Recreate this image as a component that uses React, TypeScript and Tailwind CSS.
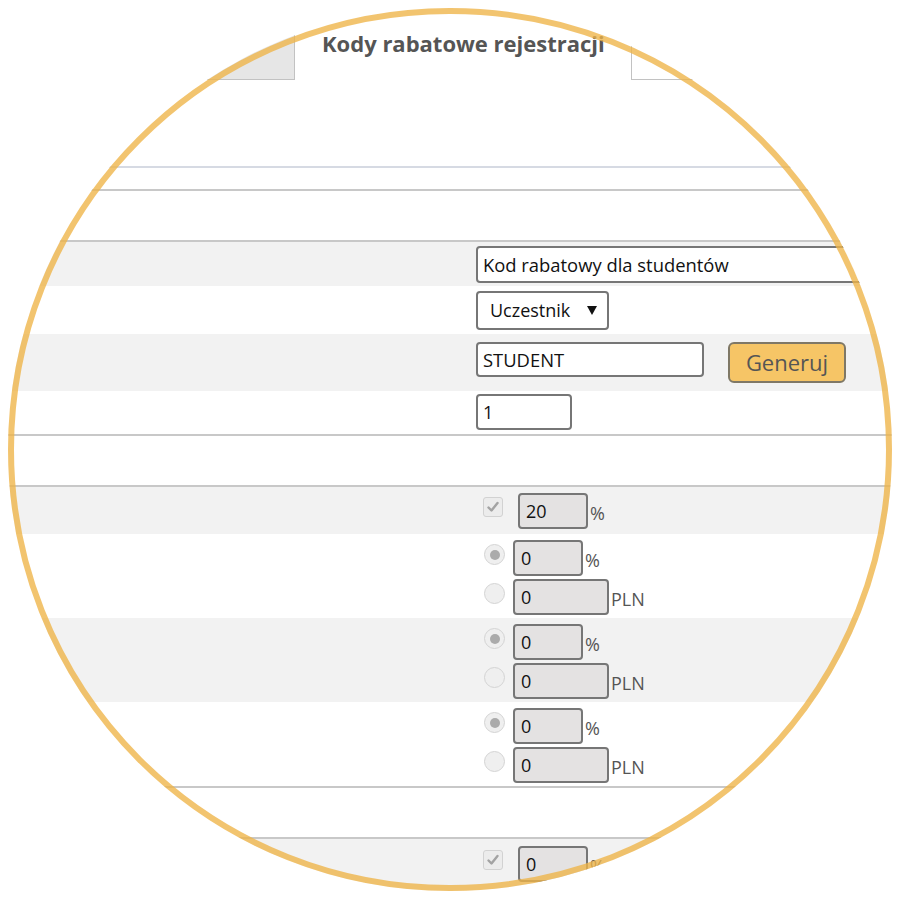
import React from "react";

function Line({ color = "bg-[#c8c8c8]" }: { color?: string }) {
  return <div className={`h-[2px] w-full ${color}`} />;
}

function Check() {
  return (
    <div className="mt-[4px] ml-[7px] flex h-[20px] w-[20px] items-center justify-center rounded-[3px] border border-[#d2d2d2] bg-[#ececec]">
      <svg width="14" height="14" viewBox="0 0 14 14">
        <path d="M2.5 7.5 L5.5 10.5 L11.5 3" fill="none" stroke="#a3a3a3" strokeWidth="2.4" strokeLinecap="round" strokeLinejoin="round" />
      </svg>
    </div>
  );
}

function Radio({ on }: { on?: boolean }) {
  return (
    <div className="mt-[4px] ml-[8px] flex h-[21px] w-[21px] items-center justify-center rounded-full border border-[#d4d4d4] bg-[#efefef]">
      {on ? <div className="h-[10px] w-[10px] rounded-full bg-[#ababab]" /> : null}
    </div>
  );
}

function DisInput({ value, w, ml }: { value: string; w: string; ml: string }) {
  return (
    <div className={`${w} ${ml} flex h-[36px] items-center rounded-[4px] border-2 border-[#767676] bg-[#e4e2e2] pl-[6px] text-[18px] text-[#111]`}>
      {value}
    </div>
  );
}

function Unit({ children }: { children: React.ReactNode }) {
  return <span className="mt-[8px] ml-[2px] text-[18px] leading-[24px] text-[#555]">{children}</span>;
}

function RadioPair({ pt = "pt-[6px]" }: { pt?: string }) {
  return (
    <div className={`flex flex-col gap-[3px] ${pt}`}>
      <div className="flex items-start">
        <Radio on />
        <DisInput value="0" w="w-[70px]" ml="ml-[8px]" />
        <Unit>%</Unit>
      </div>
      <div className="flex items-start">
        <Radio />
        <DisInput value="0" w="w-[96px]" ml="ml-[8px]" />
        <Unit>PLN</Unit>
      </div>
    </div>
  );
}

function Row({ bg, h, children }: { bg: string; h: string; children: React.ReactNode }) {
  return (
    <div className={`flex w-full ${bg} ${h}`}>
      <div className="w-[476px] shrink-0" />
      <div className="flex-1">{children}</div>
    </div>
  );
}

export default function App() {
  return (
    <div className="relative h-[900px] w-[900px] overflow-hidden bg-white font-['Open_Sans',sans-serif]">
      <div className="flex h-[900px] w-[900px] flex-col [clip-path:circle(442px_at_450px_449px)]">
        <div className="h-[28px] shrink-0" />
        <div className="flex h-[52px] shrink-0">
          <div className="w-[295px] border-r border-b border-[#c2c2c2] bg-[#e6e6e6]" />
          <div className="w-[336px] bg-white pl-[27px] pt-[1px] text-[22px] font-bold leading-[28px] text-[#555]">
            Kody rabatowe rejestracji
          </div>
          <div className="flex-1 border-l border-b border-[#c2c2c2] bg-white" />
        </div>
        <div className="h-[86px] shrink-0" />
        <Line color="bg-[#d6dae3]" />
        <div className="h-[21px] shrink-0" />
        <Line />
        <div className="h-[49px] shrink-0" />
        <Line />
        <Row bg="bg-[#f2f2f2]" h="h-[44px]">
          <div className="pt-[4px]">
            <div className="flex h-[37px] w-[520px] items-center rounded-[4px] border-2 border-[#767676] bg-white pl-[5px] text-[18.4px] text-[#111]">
              Kod rabatowy dla studentów
            </div>
          </div>
        </Row>
        <Row bg="bg-white" h="h-[48px]">
          <div className="pt-[5px]">
            <div className="flex h-[39px] w-[133px] items-center justify-between rounded-[4px] border-2 border-[#767676] bg-white pl-[12px] pr-[10px] text-[18px] text-[#111]">
              <span>Uczestnik</span>
              <svg width="10" height="9" viewBox="0 0 10 9">
                <polygon points="0,0 10,0 5,9" fill="#111" />
              </svg>
            </div>
          </div>
        </Row>
        <Row bg="bg-[#f2f2f2]" h="h-[57px]">
          <div className="flex items-start pt-[8px]">
            <div className="flex h-[35px] w-[228px] items-center rounded-[4px] border-2 border-[#767676] bg-white pl-[5px] text-[18.4px] text-[#111]">
              STUDENT
            </div>
            <div className="ml-[24px] flex h-[41px] w-[118px] items-center justify-center rounded-[6px] border-2 border-[#7f7866] bg-[#f6c566] text-[22px] text-[#555]">
              Generuj
            </div>
          </div>
        </Row>
        <Row bg="bg-white" h="h-[43px]">
          <div className="pt-[3px]">
            <div className="flex h-[36px] w-[96px] items-center rounded-[4px] border-2 border-[#767676] bg-white pl-[5px] text-[18px] text-[#111]">
              1
            </div>
          </div>
        </Row>
        <Line />
        <div className="h-[49px] shrink-0" />
        <Line />
        <Row bg="bg-[#f2f2f2]" h="h-[47px]">
          <div className="flex items-start pt-[6px]">
            <Check />
            <DisInput value="20" w="w-[70px]" ml="ml-[15px]" />
            <Unit>%</Unit>
          </div>
        </Row>
        <Row bg="bg-white" h="h-[84px]">
          <RadioPair />
        </Row>
        <Row bg="bg-[#f2f2f2]" h="h-[84px]">
          <RadioPair />
        </Row>
        <Row bg="bg-white" h="h-[84px]">
          <RadioPair />
        </Row>
        <Line />
        <div className="h-[49px] shrink-0" />
        <Line />
        <Row bg="bg-[#f2f2f2]" h="h-[61px]">
          <div className="flex items-start pt-[7px]">
            <Check />
            <DisInput value="0" w="w-[70px]" ml="ml-[15px]" />
            <Unit>%</Unit>
          </div>
        </Row>
      </div>
      <div className="pointer-events-none absolute left-[8px] top-[8px] h-[883px] w-[884px] rounded-full border-[6px] border-[rgba(238,180,70,0.78)]" />
    </div>
  );
}
